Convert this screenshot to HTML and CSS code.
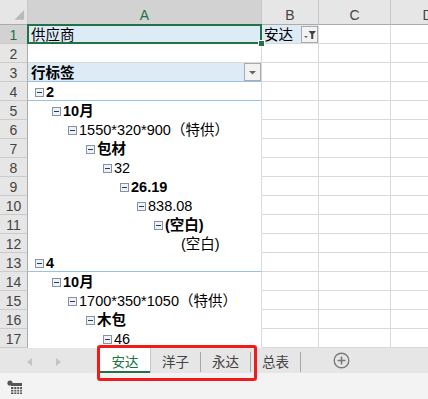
FILE: index.html
```html
<!DOCTYPE html>
<html lang="zh-CN">
<head>
    <meta charset="UTF-8">
    <meta name="viewport" content="width=device-width, initial-scale=1.0">
    <title>数据透视表</title>
    <link rel="stylesheet" href="styles.css">
</head>
<body>
<div class="app">
    <div class="sheet">
        <!-- column headers -->
        <div class="c ch corner">
            <svg width="28" height="24" viewBox="0 0 28 24"><polygon points="25,10 25,20 15,20" fill="#b9b9b9"/></svg>
        </div>
        <div class="c ch on">A</div>
        <div class="c ch">B</div>
        <div class="c ch">C</div>
        <div class="c ch">D</div>

        <!-- 1 -->
        <div class="c rh on">1</div>
        <div class="c hd sel">供应商</div>
        <div class="c hd filter-cell">安达
            <span class="btn">
                <svg width="15" height="15" viewBox="0 0 15 15">
                    <polygon points="2,9 6,9 4,11" fill="#666"/>
                    <polygon points="6.5,4 14,4 11.3,7.3 11.3,12 9.2,12 9.2,7.3" fill="#444"/>
                </svg>
            </span>
        </div>
        <div class="c"></div>
        <div class="c"></div>

        <!-- 2 -->
        <div class="c rh">2</div>
        <div class="c"></div>
        <div class="c"></div>
        <div class="c"></div>
        <div class="c"></div>

        <!-- 3 -->
        <div class="c rh">3</div>
        <div class="c hd line bold">行标签
            <span class="btn drop">
                <svg width="15" height="16" viewBox="0 0 15 16"><polygon points="4,7 11,7 7.5,10.5" fill="#666"/></svg>
            </span>
        </div>
        <div class="c"></div>
        <div class="c"></div>
        <div class="c"></div>

        <!-- 4 -->
        <div class="c rh">4</div>
        <div class="c pv line l0 bold"><i class="tg"></i>2</div>
        <div class="c"></div>
        <div class="c"></div>
        <div class="c"></div>

        <!-- 5 -->
        <div class="c rh">5</div>
        <div class="c pv l1 bold"><i class="tg"></i>10月</div>
        <div class="c"></div>
        <div class="c"></div>
        <div class="c"></div>

        <!-- 6 -->
        <div class="c rh">6</div>
        <div class="c pv l2"><i class="tg"></i>1550*320*900（特供）</div>
        <div class="c"></div>
        <div class="c"></div>
        <div class="c"></div>

        <!-- 7 -->
        <div class="c rh">7</div>
        <div class="c pv l3 bold"><i class="tg"></i>包材</div>
        <div class="c"></div>
        <div class="c"></div>
        <div class="c"></div>

        <!-- 8 -->
        <div class="c rh">8</div>
        <div class="c pv l4"><i class="tg"></i>32</div>
        <div class="c"></div>
        <div class="c"></div>
        <div class="c"></div>

        <!-- 9 -->
        <div class="c rh">9</div>
        <div class="c pv l5 bold"><i class="tg"></i>26.19</div>
        <div class="c"></div>
        <div class="c"></div>
        <div class="c"></div>

        <!-- 10 -->
        <div class="c rh">10</div>
        <div class="c pv l6"><i class="tg"></i>838.08</div>
        <div class="c"></div>
        <div class="c"></div>
        <div class="c"></div>

        <!-- 11 -->
        <div class="c rh">11</div>
        <div class="c pv l7 bold"><i class="tg"></i>(空白)</div>
        <div class="c"></div>
        <div class="c"></div>
        <div class="c"></div>

        <!-- 12 -->
        <div class="c rh">12</div>
        <div class="c pv l8 leaf">(空白)</div>
        <div class="c"></div>
        <div class="c"></div>
        <div class="c"></div>

        <!-- 13 -->
        <div class="c rh">13</div>
        <div class="c pv line l0 bold"><i class="tg"></i>4</div>
        <div class="c"></div>
        <div class="c"></div>
        <div class="c"></div>

        <!-- 14 -->
        <div class="c rh">14</div>
        <div class="c pv l1 bold"><i class="tg"></i>10月</div>
        <div class="c"></div>
        <div class="c"></div>
        <div class="c"></div>

        <!-- 15 -->
        <div class="c rh">15</div>
        <div class="c pv l2"><i class="tg"></i>1700*350*1050（特供）</div>
        <div class="c"></div>
        <div class="c"></div>
        <div class="c"></div>

        <!-- 16 -->
        <div class="c rh">16</div>
        <div class="c pv l3 bold"><i class="tg"></i>木包</div>
        <div class="c"></div>
        <div class="c"></div>
        <div class="c"></div>

        <!-- 17 -->
        <div class="c rh">17</div>
        <div class="c pv l4"><i class="tg"></i>46</div>
        <div class="c"></div>
        <div class="c"></div>
        <div class="c"></div>
    </div>

    <div class="tabbar">
        <div class="nav">
            <svg width="100" height="25" viewBox="0 0 100 25">
                <polygon points="32,10 32,18 27,14" fill="#c4c4c4"/>
                <polygon points="56,10 56,18 61,14" fill="#c4c4c4"/>
            </svg>
        </div>
        <div class="tab active">安达</div>
        <div class="tab">洋子</div>
        <span class="sep"></span>
        <div class="tab">永达</div>
        <span class="sep"></span>
        <div class="tab">总表</div>
        <span class="sep"></span>
        <div class="add">
            <svg width="17" height="17" viewBox="0 0 17 17">
                <circle cx="8.5" cy="8.5" r="7.3" fill="none" stroke="#7a7a7a" stroke-width="1.4"/>
                <path d="M8.5 4.5v8M4.5 8.5h8" stroke="#7a7a7a" stroke-width="1.6"/>
            </svg>
        </div>
    </div>

    <div class="status">
        <svg width="16" height="15" viewBox="0 0 16 15">
            <circle cx="3" cy="3" r="2.6" fill="#555"/>
            <rect x="4" y="3" width="11" height="3" fill="#555"/>
            <path d="M4 7h11v7H4z" fill="#555"/>
            <path d="M6.8 7v7M9.8 7v7M12.6 7v7M4 9.6h11M4 12h11" stroke="#f3f3f3" stroke-width="0.9"/>
        </svg>
    </div>

    <div class="mark"></div>
</div>
</body>
</html>
```

FILE: styles.css
```css
body {
    margin: 0;
    background: #fff;
    font-family: "Liberation Sans", "Noto Sans CJK SC", sans-serif;
    font-size: 14.5px;
    color: #000;
}
.app {
    position: relative;
    width: 428px;
    height: 399px;
    overflow: hidden;
}

/* grid */
.sheet {
    display: grid;
    grid-template-columns: 28px 234px 57px 72px 74px;
    grid-template-rows: 25px repeat(17, 19px);
}
.c {
    box-sizing: border-box;
    border-right: 1px solid #d9d9d9;
    border-bottom: 1px solid #d9d9d9;
    display: flex;
    align-items: center;
    white-space: nowrap;
    line-height: 18px;
    padding-top: 1px;
}
.ch {
    background: #e6e6e6;
    border-right-color: #c8c8c8;
    border-bottom-color: #ababab;
    justify-content: center;
    color: #444;
    font-size: 14px;
    padding-top: 5px;
}
.corner {
    padding: 0;
    align-items: flex-start;
}
.rh {
    background: #e6e6e6;
    border-right-color: #ababab;
    border-bottom-color: #cbcbcb;
    justify-content: center;
    color: #444;
    font-size: 14px;
}
.ch.on,
.rh.on {
    background: #d2d2d2;
    color: #217346;
}

/* pivot */
.hd {
    background: #ddebf7;
    padding-left: 3px;
}
.filter-cell {
    padding-left: 2px;
    justify-content: space-between;
}
.bold {
    font-weight: bold;
}
.line {
    border-bottom-color: #9bc2e6;
}
.pv {
    border-bottom-color: #fff;
}
.pv.line {
    border-bottom-color: #9bc2e6;
}
.btn {
    box-sizing: border-box;
    width: 17px;
    height: 17px;
    border: 1px solid #ababab;
    background: #f2f2f2;
    display: flex;
    margin-top: -1px;
}
.btn.drop {
    height: 18px;
    margin-left: auto;
}
.tg {
    box-sizing: border-box;
    width: 9px;
    height: 9px;
    border: 1px solid #8593a6;
    background: linear-gradient(#2f3b4a, #2f3b4a) center / 5px 1px no-repeat, #eef2f7;
    margin-right: 2px;
    margin-top: 1px;
    flex: none;
}
.l0 { padding-left: 7px; }
.l1 { padding-left: 24px; }
.l2 { padding-left: 40px; }
.l3 { padding-left: 58px; }
.l4 { padding-left: 75px; }
.l5 { padding-left: 92px; }
.l6 { padding-left: 109px; }
.l7 { padding-left: 126px; }
.l8.leaf { padding-left: 153px; }

/* selection on A1 */
.sel {
    position: relative;
    z-index: 1;
}
.sel::before {
    content: "";
    position: absolute;
    left: -1px;
    top: -1px;
    right: -1px;
    bottom: -1px;
    border: 2px solid #217346;
}
.sel::after {
    content: "";
    position: absolute;
    right: -4px;
    bottom: -4px;
    width: 5px;
    height: 5px;
    background: #217346;
    border: 1px solid #fff;
}

/* sheet tabs */
.tabbar {
    height: 25px;
    background: #e6e6e6;
    display: flex;
    align-items: stretch;
    font-family: "Noto Sans CJK SC", sans-serif;
    font-size: 13.5px;
    color: #444;
}
.nav {
    width: 100px;
    flex: none;
}
.tab {
    width: 49px;
    display: flex;
    align-items: center;
    justify-content: center;
    padding-top: 1px;
}
.tab.active {
    width: 50px;
    background: #fff;
    color: #217346;
    border-right: 1px solid #c6c6c6;
    box-shadow: inset 0 -2px 0 #217346;
}
.sep {
    width: 1px;
    background: #a6a6a6;
    margin: 4px 0 1px;
}
.add {
    width: 40px;
    margin-left: 32px;
    display: flex;
    align-items: center;
}
.status {
    height: 26px;
    background: #f3f3f3;
    padding: 7px 0 0 7px;
    box-sizing: border-box;
}

/* red annotation frame */
.mark {
    position: absolute;
    left: 97px;
    top: 345px;
    width: 160px;
    height: 36px;
    box-sizing: border-box;
    border: 3px solid #f21b1b;
    border-radius: 3px;
}
```
